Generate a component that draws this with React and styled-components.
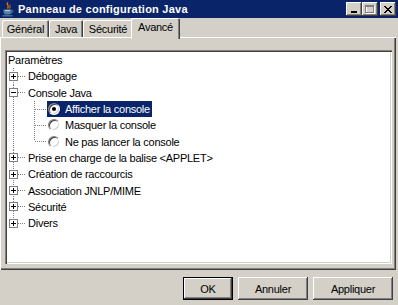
import React from 'react';
import styled, { createGlobalStyle } from 'styled-components';

const ROW = 16.3;

const Global = createGlobalStyle`
  html, body { margin: 0; padding: 0; background: #d4d0c8; }
  body {
    font-family: "Liberation Sans", Arial, sans-serif;
    font-size: 11px;
    letter-spacing: -0.25px;
    color: #000;
  }
`;

const Window = styled.div`
  width: 398px;
  height: 305px;
  background: #d4d0c8;
  display: flex;
  flex-direction: column;
  overflow: hidden;
`;

const TitleBar = styled.div`
  flex: none;
  height: 18px;
  background: #0a246a;
  display: flex;
  align-items: center;
  padding: 0 2px 0 2px;
`;

const TitleText = styled.div`
  flex: 1;
  color: #fff;
  font-weight: bold;
  font-size: 11px;
  letter-spacing: 0.25px;
  margin-left: 4px;
  white-space: nowrap;
`;

const CaptionButtons = styled.div`
  display: flex;
  align-items: center;
`;

const CaptionButton = styled.div`
  box-sizing: border-box;
  width: 16px;
  height: 14px;
  margin-left: ${p => p.$gap || 0}px;
  background: #d4d0c8;
  box-shadow: inset -1px -1px #404040, inset 1px 1px #fff, inset -2px -2px #808080, inset 2px 2px #d4d0c8;
  display: flex;
  align-items: center;
  justify-content: center;
  svg { display: block; }
`;

const TabStrip = styled.div`
  flex: none;
  position: relative;
  z-index: 1;
  display: flex;
  align-items: flex-end;
  height: 19px;
  padding-left: 2px;
`;

const Tab = styled.div`
  box-sizing: border-box;
  width: ${p => p.$w + (p.$active ? 4 : 0)}px;
  height: ${p => (p.$active ? 21 : 17)}px;
  margin: 0 ${p => (p.$active ? -2 : 0)}px ${p => (p.$active ? -2 : 0)}px;
  padding-bottom: ${p => (p.$active ? 4 : 0)}px;
  background: #d4d0c8;
  border-radius: 2px 2px 0 0;
  box-shadow: inset 1px 1px #fff, inset -1px 0 #404040, inset -2px 0 #808080;
  display: flex;
  align-items: center;
  justify-content: center;
  white-space: nowrap;
`;

const Panel = styled.div`
  flex: none;
  box-sizing: border-box;
  width: 396px;
  height: 233px;
  padding: 13px 4px 6px 5px;
  display: flex;
  box-shadow: inset 1px 1px #fff, inset -1px -1px #404040, inset -2px -2px #808080;
`;

const TreeBox = styled.div`
  flex: 1;
  box-sizing: border-box;
  background: #fff;
  padding: 2px;
  box-shadow: inset 1px 1px #808080, inset 2px 2px #404040, inset -1px -1px #fff, inset -2px -2px #d4d0c8;
`;

const Row = styled.div`
  display: flex;
  align-items: center;
  height: ${ROW}px;
`;

const Branch = styled.div`
  margin-left: ${p => p.$indent || 0}px;
`;

const Node = styled.div`
  background-image: repeating-linear-gradient(to bottom, #808080 0 1px, transparent 1px 2px);
  background-repeat: no-repeat;
  background-position: 6px 0;
  background-size: 1px ${p => (p.$last ? '8px' : '100%')};
`;

const HDots = styled.div`
  flex: none;
  width: ${p => p.$w}px;
  margin-left: ${p => p.$ml || 0}px;
  height: 1px;
  background: repeating-linear-gradient(to right, #808080 0 1px, transparent 1px 2px);
`;

const Label = styled.div`
  display: flex;
  align-items: center;
  gap: 5px;
  height: 16px;
  padding: 0 2px 0 ${p => (p.$radio ? 1 : 2)}px;
  white-space: nowrap;
  background: ${p => (p.$selected ? '#0a246a' : 'transparent')};
  color: ${p => (p.$selected ? '#fff' : '#000')};
`;

const RootLabel = styled.div`
  height: ${ROW}px;
  display: flex;
  align-items: center;
  padding-left: 1px;
`;

const Radio = styled.span`
  flex: none;
  box-sizing: border-box;
  width: 12px;
  height: 12px;
  border-radius: 50%;
  background: #fff;
  border: 1px solid;
  border-color: #808080 #fff #fff #808080;
  box-shadow: inset 1px 1px #404040, inset -1px -1px #d4d0c8;
  display: flex;
  align-items: center;
  justify-content: center;
  &::after {
    content: '';
    width: 4px;
    height: 4px;
    border-radius: 50%;
    background: ${p => (p.$checked ? '#000' : 'transparent')};
  }
`;

const Footer = styled.div`
  display: flex;
  justify-content: flex-end;
  gap: 5px;
  padding: 7px 5px 0 0;
`;

const Button = styled.div`
  box-sizing: border-box;
  width: ${p => p.$w}px;
  height: 23px;
  background: #d4d0c8;
  border: ${p => (p.$default ? '1px solid #000' : 'none')};
  box-shadow: inset -1px -1px #404040, inset 1px 1px #fff, inset -2px -2px #808080, inset 2px 2px #d4d0c8;
  display: flex;
  align-items: center;
  justify-content: center;
`;

const JavaIcon = () => (
  <svg width="12" height="15" viewBox="0 0 12 15">
    <path d="M6 0.5 C3.5 2.5 8 3.5 5.5 6.5" stroke="#e76f00" strokeWidth="1.3" fill="none" />
    <path d="M8.2 2.5 C6.8 3.8 9.2 4.5 7.6 6.5" stroke="#e76f00" strokeWidth="1" fill="none" />
    <path d="M1.5 7.5 H9.5 V9.5 A3 3 0 0 1 6.5 12.5 H4.5 A3 3 0 0 1 1.5 9.5 Z" fill="#5382a1" />
    <path d="M9.5 8.2 C11.5 8 11.5 10.5 9 11" stroke="#5382a1" strokeWidth="1" fill="none" />
    <path d="M3 8.6 H8" stroke="#dfe8f0" strokeWidth="0.8" />
    <path d="M0.5 13.8 H10.5" stroke="#5382a1" strokeWidth="1.2" />
  </svg>
);

const Expander = ({ open }) => (
  <svg width="9" height="9" viewBox="0 0 9 9" style={{ flex: 'none', marginLeft: 2 }} shapeRendering="crispEdges">
    <rect x="0.5" y="0.5" width="8" height="8" fill="#fff" stroke="#808080" />
    <path d="M2 4.5 H7" stroke="#000" />
    {!open && <path d="M4.5 2 V7" stroke="#000" />}
  </svg>
);

const items = [
  { label: 'Débogage' },
  {
    label: 'Console Java',
    open: true,
    children: [
      { label: 'Afficher la console', checked: true, selected: true },
      { label: 'Masquer la console' },
      { label: 'Ne pas lancer la console' },
    ],
  },
  { label: 'Prise en charge de la balise <APPLET>' },
  { label: 'Création de raccourcis' },
  { label: 'Association JNLP/MIME' },
  { label: 'Sécurité' },
  { label: 'Divers' },
];

const tabs = [
  { label: 'Général', w: 47 },
  { label: 'Java', w: 34 },
  { label: 'Sécurité', w: 50 },
  { label: 'Avancé', w: 45, active: true },
];

export default function App() {
  return (
    <>
      <Global />
      <Window>
        <TitleBar>
          <JavaIcon />
          <TitleText>Panneau de configuration Java</TitleText>
          <CaptionButtons>
            <CaptionButton>
              <svg width="8" height="7" viewBox="0 0 8 7" shapeRendering="crispEdges">
                <rect x="1" y="5" width="6" height="2" fill="#000" />
              </svg>
            </CaptionButton>
            <CaptionButton>
              <svg width="10" height="9" viewBox="0 0 10 9" shapeRendering="crispEdges">
                <rect x="1.5" y="1.5" width="8" height="7" fill="none" stroke="#fff" />
                <rect x="0.5" y="0.5" width="8" height="7" fill="none" stroke="#808080" />
                <rect x="0" y="1" width="9" height="1" fill="#808080" />
              </svg>
            </CaptionButton>
            <CaptionButton $gap={2}>
              <svg width="8" height="7" viewBox="0 0 8 7" shapeRendering="crispEdges">
                <path d="M0 0h2v1h-2zM6 0h2v1h-2zM1 1h2v1h-2zM5 1h2v1h-2zM2 2h4v1h-4zM3 3h2v1h-2zM2 4h4v1h-4zM1 5h2v1h-2zM5 5h2v1h-2zM0 6h2v1h-2zM6 6h2v1h-2z" fill="#000" />
              </svg>
            </CaptionButton>
          </CaptionButtons>
        </TitleBar>

        <TabStrip>
          {tabs.map(t => (
            <Tab key={t.label} $w={t.w} $active={t.active}>
              {t.label}
            </Tab>
          ))}
        </TabStrip>

        <Panel>
          <TreeBox>
            <RootLabel>Paramètres</RootLabel>
            <Branch>
              {items.map((it, i) => (
                <Node key={it.label} $last={i === items.length - 1}>
                  <Row>
                    <Expander open={it.open} />
                    <HDots $w={8} />
                    <Label>{it.label}</Label>
                  </Row>
                  {it.children && (
                    <Branch $indent={21}>
                      {it.children.map((c, j) => (
                        <Node key={c.label} $last={j === it.children.length - 1}>
                          <Row>
                            <HDots $w={12} $ml={7} />
                            <Label $radio $selected={c.selected}>
                              <Radio $checked={c.checked} />
                              {c.label}
                            </Label>
                          </Row>
                        </Node>
                      ))}
                    </Branch>
                  )}
                </Node>
              ))}
            </Branch>
          </TreeBox>
        </Panel>

        <Footer>
          <Button $w={50} $default>OK</Button>
          <Button $w={70}>Annuler</Button>
          <Button $w={80}>Appliquer</Button>
        </Footer>
      </Window>
    </>
  );
}
